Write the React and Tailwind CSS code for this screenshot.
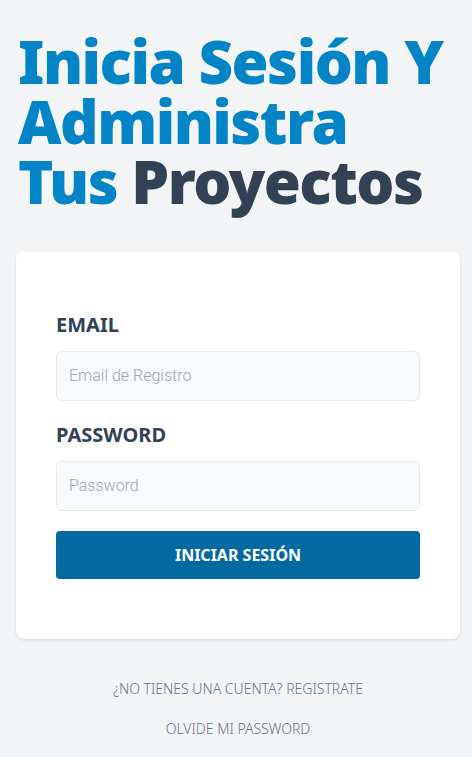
export default function App() {
  return (
    <div className="min-h-screen bg-[#f3f4f6] font-['Noto_Sans',sans-serif]">
      <main className="pl-4 pr-3 pt-[31px]">
        <h1 className="pl-[2px] text-[60px] leading-none font-black text-[#0284c7] tracking-[-1.5px]">
          Inicia Sesión Y Administra Tus <span className="text-[#334155]">Proyectos</span>
        </h1>
        <form className="my-10 bg-white rounded-lg p-10 shadow-[0_1px_3px_0_rgb(0_0_0/0.1),0_1px_2px_-1px_rgb(0_0_0/0.1)]">
          <div className="my-5">
            <label className="block uppercase text-[#334155] text-xl font-bold" htmlFor="email">
              Email
            </label>
            <input
              id="email"
              type="email"
              placeholder="Email de Registro"
              className="w-full mt-3 p-3 border border-[#e5e7eb] rounded-md bg-[#f9fafb] text-base leading-6 font-['Roboto',sans-serif] font-light placeholder:text-[#9ca3af] outline-none"
            />
          </div>
          <div className="my-5">
            <label className="block uppercase text-[#334155] text-xl font-bold" htmlFor="password">
              Password
            </label>
            <input
              id="password"
              type="password"
              placeholder="Password"
              className="w-full mt-3 p-3 border border-[#e5e7eb] rounded-md bg-[#f9fafb] text-base leading-6 font-['Roboto',sans-serif] font-light placeholder:text-[#9ca3af] outline-none"
            />
          </div>
          <button
            type="button"
            className="block w-full mb-5 py-3 bg-[#0369a1] text-white uppercase font-bold text-base leading-6 rounded"
          >
            Iniciar Sesión
          </button>
        </form>
        <nav>
          <a className="block text-center my-5 text-[#64748b] uppercase text-sm leading-5 font-light" href="#">
            ¿No tienes una cuenta? Registrate
          </a>
          <a className="block text-center my-5 text-[#64748b] uppercase text-sm leading-5 font-light" href="#">
            Olvide mi Password
          </a>
        </nav>
      </main>
    </div>
  );
}
